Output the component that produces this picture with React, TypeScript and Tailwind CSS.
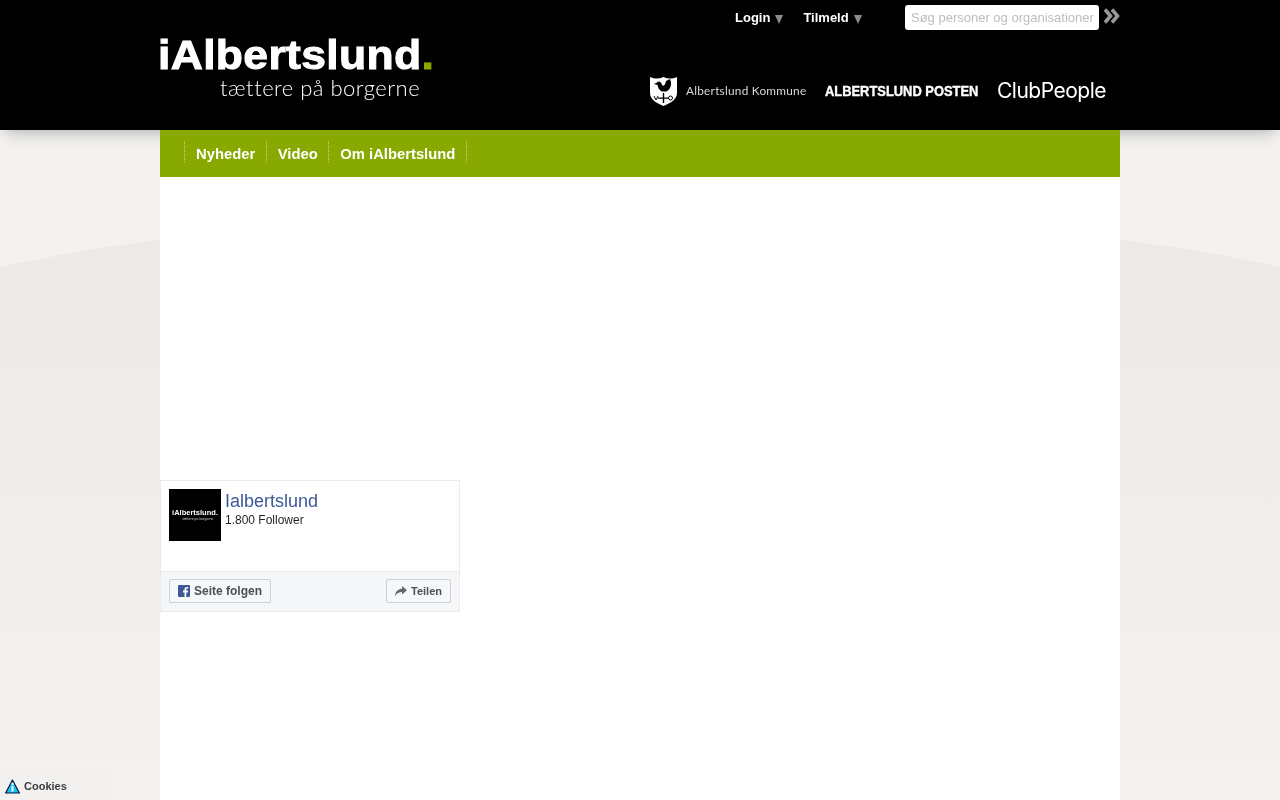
const menuItems = ['Nyheder', 'Video', 'Om iAlbertslund'];

const TopLink = ({ label }: { label: string }) => (
  <a className="flex items-center text-[13px] font-bold leading-none text-white">
    {label}
    <svg className="ml-[5px] mt-[3px] h-[9px] w-[8px]" viewBox="0 0 8 9">
      <path d="M0 0h8L4 9z" fill="#8c8c8c" />
    </svg>
  </a>
);

const Shield = () => (
  <svg className="h-[30px] w-[27px]" viewBox="0 0 27 30">
    <path d="M0 1C5 3 9 3 13.500 1c4.500 2 8.500 2 13.500 0v16c0 6-6 10-13.500 13C6 27 0 23 0 17z" fill="#fff" />
    {/* hane paa vindfloej */}
    <path d="M4 8l3-1.500c1.500-1.500 3-1 4 .5l2 3 2-1.500 1-3.500 4-2c1.500 3 1.500 7-.5 10l-3 2.500h-5l-3-3-1-3.500z" fill="#000" />
    <path d="M12.800 17h1.400v10h-1.400zM8 21.500h11v1.200H8z" fill="#000" />
    <path d="M4 20l2 4 2-4" fill="none" stroke="#000" />
    <circle cx="20.500" cy="22" r="2" fill="none" stroke="#000" />
  </svg>
);

const Partners = () => (
  <div className="flex items-center">
    <Shield />
    <span className="ml-[9px] w-[120px] whitespace-nowrap font-['Lato',sans-serif] text-[11.8px] tracking-[0.25px] text-[#d8d8d8]">
      Albertslund Kommune
    </span>
    <span className="ml-[19px] w-[153px] origin-left scale-x-[0.86] whitespace-nowrap text-[15px] font-bold text-white [-webkit-text-stroke:0.4px_white]">
      ALBERTSLUND POSTEN
    </span>
    <span className="ml-[19px] w-[108px] whitespace-nowrap font-['Inter',sans-serif] text-[21px] tracking-[-0.5px] text-white">
      ClubPeople
    </span>
  </div>
);

const Header = () => (
  <header className="relative z-10 h-[130px] bg-black shadow-[0_6px_16px_-6px_rgba(0,0,0,0.35)]">
    <div className="mx-auto flex h-full w-[960px] justify-between">
      <div className="pt-[36px]">
        <div className="ml-[-2px] origin-left scale-x-[1.085] whitespace-nowrap text-[41px] font-bold leading-[38px] tracking-[0.3px] text-white [-webkit-text-stroke:1px_white]">
          iAlbertslund<span className="text-[#88a900] [-webkit-text-stroke:1px_#88a900]">.</span>
        </div>
        <div className="ml-[60px] mt-[4px] whitespace-nowrap font-['Lato',sans-serif] text-[22px] font-light leading-[20px] tracking-[0.5px] text-white">
          tættere på borgerne
        </div>
      </div>
      <div className="flex w-[470px] flex-col items-end">
        <div className="flex h-[35px] w-full items-start pt-[5px]">
          <div className="ml-[85px] flex gap-[20px] pt-[6px]">
            <TopLink label="Login" />
            <TopLink label="Tilmeld" />
          </div>
          <input
            readOnly
            placeholder="Søg personer og organisationer"
            className="ml-auto h-[25px] w-[194px] rounded-[3px] bg-white px-[6px] text-[13px] placeholder:text-[#bdbdbd]"
          />
          <svg className="ml-[4px] mt-[3px] h-[16px] w-[17px]" viewBox="0 0 17 16">
            <path d="M2 1.500l5.500 6.500L2 14.500M9 1.500l5.500 6.500L9 14.500" fill="none" stroke="#9a9a9a" strokeWidth="3.500" />
          </svg>
        </div>
        <div className="mt-[40px] flex w-full justify-end pr-[15px]">
          <Partners />
        </div>
      </div>
    </div>
  </header>
);

const FacebookWidget = () => (
  <div className="flex h-[132px] w-[300px] flex-col border border-[#e9ebee] bg-white">
    <div className="flex flex-1 gap-[4px] p-[8px]">
      <div className="flex h-[52px] w-[52px] shrink-0 flex-col items-center justify-center bg-black text-white">
        <span className="text-[7.5px] font-bold leading-[8px]">iAlbertslund.</span>
        <span className="ml-[6px] text-[3.500px] leading-[4px] text-[#ccc]">tættere på borgerne</span>
      </div>
      <div>
        <div className="text-[18px] leading-[24px] text-[#3b5998]">Ialbertslund</div>
        <div className="text-[12px] leading-[14px] text-[#1d2129]">1.800 Follower</div>
      </div>
    </div>
    <div className="flex h-[40px] items-center justify-between border-t border-[#e9ebee] bg-[#f5f6f7] px-[8px] pb-[1px]">
      <button className="flex h-[24px] items-center gap-[4px] rounded-[2px] border border-[#ced0d4] bg-[#f6f7f9] px-[8px] text-[12px] font-bold text-[#4b4f56]">
        <svg className="h-[12px] w-[12px]" viewBox="0 0 12 12">
          <rect width="12" height="12" rx="1" fill="#3b5998" />
          <path d="M8.300 12V7.400h1.500l.2-1.800H8.300V4.500c0-.5.200-.9.900-.9h1V2c-.2 0-.8-.1-1.400-.1-1.400 0-2.300.8-2.300 2.400v1.300H5v1.800h1.500V12z" fill="#fff" />
        </svg>
        Seite folgen
      </button>
      <button className="flex h-[24px] items-center gap-[4px] rounded-[2px] border border-[#ced0d4] bg-[#f6f7f9] px-[8px] text-[11px] font-bold text-[#4b4f56]">
        <svg className="h-[10px] w-[12px]" viewBox="0 0 12 10">
          <path d="M7 0l5 4.300L7 8.600V6C4 6 2 7 0 10c.3-4 2.500-6.800 7-7.300z" fill="#606770" />
        </svg>
        Teilen
      </button>
    </div>
  </div>
);

const Cookies = () => (
  <div className="fixed bottom-0 left-0 z-30 flex h-[29px] w-[110px] items-center bg-[#f2f1ef] pl-[5px] pt-[1px]">
    <svg className="h-[15px] w-[15px]" viewBox="0 0 15 15">
      <path d="M7.500 1L14.400 14H.6z" fill="#1cc0f5" stroke="#0a1440" strokeWidth="1.200" strokeLinejoin="round" />
      <path d="M6.500 4h2v2h-2zM6.500 7h2v5.500h-2z" fill="#fff" />
    </svg>
    <span className="ml-[4px] text-[11px] font-bold text-[#3c3c3c]">Cookies</span>
  </div>
);

export default function App() {
  return (
    <div className="relative h-screen overflow-hidden bg-[#f3f2f0] font-['Liberation_Sans',sans-serif] will-change-transform">
      {/* baggrundens bue */}
      <svg className="absolute inset-x-0 top-[240px] h-[560px] w-[1280px]" viewBox="0 0 1280 560">
        <defs>
          <linearGradient id="bue" x1="0" y1="0" x2="0" y2="1">
            <stop offset="0" stopColor="#ebeae8" />
            <stop offset="1" stopColor="#f3f2f0" />
          </linearGradient>
        </defs>
        <path d="M0 27C55 15 110 6 160 0H1120C1170 6 1225 15 1280 27V560H0z" fill="url(#bue)" />
      </svg>
      <Header />
      <main className="relative z-20 mx-auto h-[670px] w-[960px] bg-white">
        <nav className="flex h-[47px] items-center bg-[#88a900] pl-[24px]">
          {menuItems.map((item) => (
            <a
              key={item}
              className="mb-[4px] flex h-[21px] items-center border-l border-dotted border-[#c9d88a] pl-[11px] pr-[10.5px] pt-[5px] text-[14.8px] font-bold text-white last:border-r"
            >
              {item}
            </a>
          ))}
        </nav>
        <div className="pt-[303px]">
          <FacebookWidget />
        </div>
      </main>
      <Cookies />
    </div>
  );
}
